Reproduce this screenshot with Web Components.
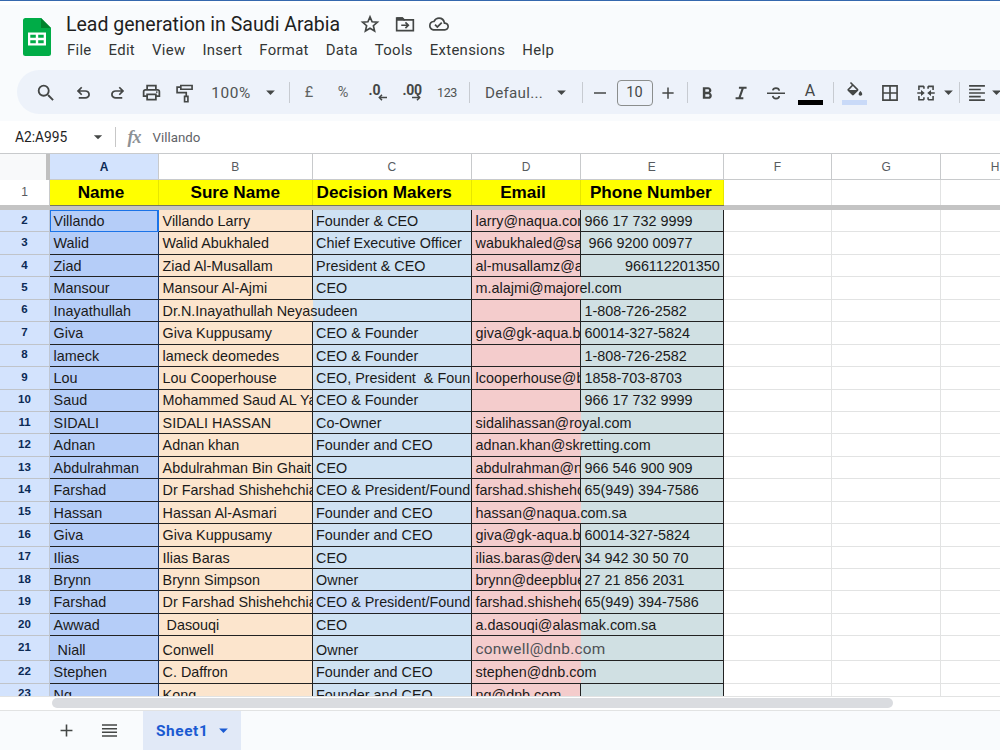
<!DOCTYPE html>
<html lang="en">
<head>
<meta charset="utf-8">
<title>Lead generation in Saudi Arabia</title>
<style>
    html, body { margin: 0; height: 100%; overflow: hidden; background: #fff; }
</style>
</head>
<body>
<sheet-app>
    <doc-header slot="header" name="Lead generation in Saudi Arabia"></doc-header>
    <tool-bar slot="toolbar"></tool-bar>
    <formula-bar slot="formula" range="A2:A995" value="Villando"></formula-bar>
    <sheet-grid></sheet-grid>
    <sheet-tabs slot="footer">Sheet1</sheet-tabs>
</sheet-app>

<script>
const ICONS = {
    star: '<path d="M12 3.4l2.5 5.9 6.4.55-4.85 4.2 1.45 6.25L12 17l-5.5 3.3 1.45-6.25-4.85-4.2 6.4-.55z" fill="none" stroke="currentColor" stroke-width="2"/>',
    move: '<path d="M2 5h7l2 2h11v13H2z" fill="none" stroke="currentColor" stroke-width="2"/><path d="M2 4h7l3 4H2z"/><path d="M7.5 13.5h8M12.5 10l3.5 3.5-3.5 3.5" fill="none" stroke="currentColor" stroke-width="2"/>',
    cloud: '<path d="M19.35 10.04A7.49 7.49 0 0 0 12 4C9.11 4 6.6 5.64 5.35 8.04A5.994 5.994 0 0 0 0 14c0 3.31 2.69 6 6 6h13c2.76 0 5-2.24 5-5 0-2.64-2.05-4.78-4.65-4.96zM19 18H6c-2.21 0-4-1.79-4-4 0-2.05 1.53-3.76 3.56-3.97l1.07-.11.5-.95A5.469 5.469 0 0 1 12 6c2.62 0 4.88 1.86 5.39 4.43l.3 1.5 1.53.11A2.98 2.98 0 0 1 22 15c0 1.65-1.35 3-3 3zm-9-3.82l-2.09-2.09L6.5 13.5 10 17l6.01-6.01-1.41-1.41z"/>',
    search: '<path d="M15.5 14h-.79l-.28-.27A6.471 6.471 0 0 0 16 9.5 6.5 6.5 0 1 0 9.5 16c1.61 0 3.09-.59 4.23-1.57l.27.28v.79l5 4.99L20.49 19l-4.99-5zm-6 0C7.01 14 5 11.99 5 9.5S7.01 5 9.5 5 14 7.01 14 9.5 11.99 14 9.5 14z"/>',
    undo: '<path d="M6 20v-2.200h8.300c1 0 1.850-.3 2.550-.95s1.050-1.450 1.050-2.350-.35-1.700-1.050-2.350-1.550-.95-2.550-.95H7.600l2.900 2.900L9 15.600 3.500 10.100 9 4.600l1.500 1.500-2.900 2.900h6.700c1.600 0 2.980.520 4.120 1.560S20.100 12.930 20.100 14.500s-.57 2.900-1.700 3.940S15.900 20 14.300 20z"/>',
    print: '<path d="M19 8h-1V3H6v5H5c-1.660 0-3 1.340-3 3v6h4v4h12v-4h4v-6c0-1.660-1.340-3-3-3zM8 5h8v3H8zm8 14H8v-4h8zm2-4v-2H6v2H4v-4c0-.55.45-1 1-1h14c.55 0 1 .45 1 1v4z"/><circle cx="18" cy="11.500" r="1"/>',
    roller: '<path d="M7 3h13.500v4.500H7zM7 5H2.500v6.500h11v4M11.500 16h4v6.500h-4z" fill="none" stroke="currentColor" stroke-width="2"/>',
    caret: '<path d="M6.500 9.500h11L12 15z"/>',
    minus: '<path d="M4 11h16v2H4z"/>',
    plus: '<path d="M19.500 13H13v6.500h-2V13H4.500v-2H11V4.500h2V11h6.500z"/>',
    bold: '<path d="M15.600 11.790c.97-.67 1.650-1.770 1.650-2.790 0-2.260-1.750-4-4-4H7v14h7.040c2.090 0 3.710-1.700 3.710-3.790 0-1.520-.86-2.820-2.150-3.420zM10 7.500h3c.83 0 1.500.67 1.500 1.500s-.67 1.500-1.500 1.500h-3zm3.500 9H10v-3h3.500c.83 0 1.500.67 1.500 1.500s-.67 1.500-1.500 1.500z"/>',
    italic: '<path d="M9.500 4.500v2.300h3.100L9 17.200H5.500v2.300h9.300v-2.300h-3.100l3.600-10.400h3.400V4.500z"/>',
    strike: '<path d="M0 11.200h24v2H0z"/><path d="M16.300 9c-.2-2.400-1.900-3.600-4.300-3.600-2.300 0-4 1.100-4.300 3.200M7.700 15.900c.3 2.300 1.900 3.500 4.300 3.500s4.300-1.200 4.300-3.500" fill="none" stroke="currentColor" stroke-width="2.200"/>',
    fill: '<path d="M16.560 8.940L7.620 0 6.210 1.410l2.380 2.380-5.150 5.150a1.490 1.490 0 0 0 0 2.120l5.500 5.500c.29.290.68.440 1.060.44s.77-.15 1.060-.44l5.500-5.500c.59-.58.59-1.530 0-2.120zM10 5.210L14.790 10H5.210zM19.500 11.500s-2.300 2.170-2.300 3.700c0 1.200 1 2.200 2.300 2.200s2.300-1 2.300-2.200c0-1.530-2.300-3.700-2.300-3.700z"/>',
    borders: '<path d="M2.500 2.500v19h19v-19zm8.500 17H4.500V13H11zm0-8.500H4.500V4.500H11zm8.500 8.500H13V13h6.500zm0-8.500H13V4.500h6.500z"/>',
    merge: '<path d="M9.500 4H3.500v4.500M14.500 4h6v4.500M9.500 20H3.500v-4.500M14.500 20h6v-4.500M9.500 4v3M14.500 4v3M9.500 20v-3M14.500 20v-3" fill="none" stroke="currentColor" stroke-width="1.900"/><path d="M1.500 11h4.500V8.500L10.500 12 6 15.500V13H1.500zM22.500 11H18V8.500L13.500 12l4.500 3.500V13h4.500z"/>',
    align: '<path d="M2.500 2.500h19v2h-19zm0 4.250h14v2h-14zm0 4.250h19v2h-19zm0 4.250h14v2h-14zm0 4.250h19v2h-19z"/>',
    menu: '<path d="M2.500 4h19v2h-19zm0 4.700h19v2h-19zm0 4.600h19v2h-19zm0 4.700h19v2h-19z"/>',
};

function icon(name, size = 20, extra = '') {
    return `<svg viewBox="0 0 24 24" width="${size}" height="${size}" fill="currentColor" ${extra}>${ICONS[name]}</svg>`;
}

class SheetApp extends HTMLElement {
    constructor() {
        super();
        this.attachShadow({ mode: 'open' }).innerHTML = `
            <style>
                :host {
                    display: flex;
                    flex-direction: column;
                    box-sizing: border-box;
                    width: 1000px;
                    height: 750px;
                    overflow: hidden;
                    font-family: Roboto, "Liberation Sans", sans-serif;
                    color: #444746;
                }
                .top {
                    box-sizing: border-box;
                    height: 121px;
                    flex: none;
                    background: #f9fbfd;
                    border-top: 1px solid #3568ae;
                }
                .strip { height: 4px; background: #fff; }
            </style>
            <div class="top">
                <div class="strip"></div>
                <slot name="header"></slot>
                <slot name="toolbar"></slot>
            </div>
            <slot name="formula"></slot>
            <slot></slot>
            <slot name="footer"></slot>
        `;
    }
}

class DocHeader extends HTMLElement {
    constructor() {
        super();
        const menus = ['File', 'Edit', 'View', 'Insert', 'Format', 'Data', 'Tools', 'Extensions', 'Help'];
        this.attachShadow({ mode: 'open' }).innerHTML = `
            <style>
                :host { display: flex; height: 65px; padding-left: 23px; }
                .logo { flex: none; width: 28px; margin: 13px 15px 0 0; }
                .logo svg { display: block; }
                .title { display: flex; align-items: center; height: 28px; margin-top: 5px; color: #1f1f1f; }
                h1 { margin: 0; width: 274px; font-size: 19.5px; font-weight: 400; letter-spacing: 0; white-space: nowrap; }
                .title svg { color: #444746; margin-left: 14.500px; }
                .title svg:first-of-type { margin-left: 20px; }
                nav { display: flex; gap: 17px; height: 24px; align-items: center; padding-left: 1px; font-size: 14.900px; letter-spacing: 0.300px; color: #333635; white-space: nowrap; }
            </style>
            <div class="logo">
                <svg width="28" height="38" viewBox="0 0 28 38">
                    <path d="M2.500 0H18l10 10v25.500a2.500 2.500 0 0 1-2.500 2.500h-23A2.500 2.500 0 0 1 0 35.500v-33A2.500 2.500 0 0 1 2.500 0z" fill="#00ac47"/>
                    <path d="M18 0l10 10H18z" fill="#00832d"/>
                    <path d="M5 14.500h18v13H5zM7.300 16.800v3h5.500v-3zm7.900 0v3h5.500v-3zM7.300 22.200v3h5.500v-3zm7.900 0v3h5.500v-3z" fill="#fff" fill-rule="evenodd"/>
                </svg>
            </div>
            <div>
                <div class="title"><h1>${this.getAttribute('name')}</h1>${icon('star', 20)}${icon('move', 20)}${icon('cloud', 20)}</div>
                <nav>${menus.map(m => `<span>${m}</span>`).join('')}</nav>
            </div>
        `;
    }
}

class ToolBar extends HTMLElement {
    constructor() {
        super();
        // [cell width, content]
        const items = [
            [34, icon('search', 22)],
            [3, ''],
            [34, icon('undo', 19)],
            [34, icon('undo', 19, 'style="transform:scaleX(-1)"')],
            [34, icon('print', 21)],
            [33, icon('roller', 20)],
            [60, '<span class="zoom">100%</span>'],
            [18, icon('caret', 19)],
            [20, '<i></i>'],
            [20, '<span class="fmt">£</span>'],
            [48, '<span class="fmt">%</span>'],
            [20, '<span class="dec">.0<svg width="9" height="7" viewBox="0 0 9 7"><path d="M9 3.500H1.500M4 .8L1.300 3.500 4 6.200" fill="none" stroke="currentColor" stroke-width="1.500"/></svg></span>'],
            [50, '<span class="dec two">.00<svg width="9" height="7" viewBox="0 0 9 7"><path d="M0 3.500h7.500M5 .8l2.700 2.700L5 6.200" fill="none" stroke="currentColor" stroke-width="1.500"/></svg></span>'],
            [20, '<span class="num">123</span>'],
            [24, '<i></i>'],
            [66, '<span class="font">Defaul...</span>'],
            [28, icon('caret', 19)],
            [14, '<i></i>'],
            [22, icon('minus', 18)],
            [47, '<span class="size">10</span>'],
            [20, icon('plus', 18)],
            [18, '<i></i>'],
            [22, icon('bold', 20)],
            [46, icon('italic', 20)],
            [24, icon('strike', 18)],
            [44, '<span class="color"><span>A</span><b></b></span>'],
            [2, '<i></i>'],
            [41, `<span class="color fill">${icon('fill', 19)}<b></b></span>`],
            [30, icon('borders', 20)],
            [42, icon('merge', 20)],
            [2, icon('caret', 19)],
            [20, '<i></i>'],
            [16, icon('align', 20)],
            [22, icon('caret', 19)],
        ];
        this.attachShadow({ mode: 'open' }).innerHTML = `
            <style>
                :host {
                    display: flex;
                    align-items: center;
                    box-sizing: border-box;
                    height: 44px;
                    margin-left: 17px;
                    padding-left: 12px;
                    border-radius: 22px 0 0 22px;
                    background: #edf2fa;
                    overflow: hidden;
                    color: #444746;
                }
                div { display: flex; flex: none; align-items: center; justify-content: center; box-sizing: border-box; height: 44px; padding-top: 1px; white-space: nowrap; }
                svg { flex: none; display: block; }
                i { flex: none; width: 1px; height: 21px; background: #c7cbd1; }
                .zoom { font-size: 15.400px; letter-spacing: 0.600px; color: #505352; }
                .fmt { font-size: 14.500px; color: #606362; }
                .num { font-size: 12.500px; letter-spacing: -0.300px; color: #505352; }
                .font { font-size: 15.200px; letter-spacing: 0.250px; color: #505352; }
                .dec { display: flex; flex-direction: column; align-items: flex-start; width: 17px; font-size: 14px; line-height: 13px; font-weight: 700; }
                .dec svg { margin: -3px 0 0 9px; }
                .dec.two { width: 19px; letter-spacing: -0.300px; }
                .size { box-sizing: border-box; width: 36px; height: 26px; border: 1px solid #8b8e8d; border-radius: 4px; text-align: center; font-size: 14.500px; line-height: 24px; }
                .color { display: flex; flex-direction: column; align-items: center; justify-content: flex-end; width: 25px; height: 25px; font-size: 16px; line-height: 16px; }
                .color b { width: 25px; height: 5px; background: #000; margin-top: 1px; }
                .color.fill { justify-content: flex-end; }
                .fill b { background: #c9daf8; margin-top: -1px; }
            </style>
            ${items.map(([w, html]) => `<div style="width:${w}px">${html}</div>`).join('')}
        `;
    }
}

class FormulaBar extends HTMLElement {
    constructor() {
        super();
        this.attachShadow({ mode: 'open' }).innerHTML = `
            <style>
                :host { display: flex; flex: none; align-items: center; height: 32px; background: #fff; font-size: 13.800px; }
                .range { width: 73.500px; padding-left: 15px; color: #1f1f1f; }
                .sep { width: 1px; height: 20px; margin: 0 12px 0 8px; background: #c7c7c7; }
                .fx { width: 25px; font: italic 700 18px "Liberation Serif", serif; color: #8d9195; letter-spacing: -1px; }
                .value { color: #5f6368; font-size: 13.300px; }
            </style>
            <span class="range">${this.getAttribute('range')}</span>
            ${icon('caret', 18)}
            <span class="sep"></span>
            <span class="fx">fx</span>
            <span class="value">${this.getAttribute('value')}</span>
        `;
    }
}

const rows = [
    ['Villando', 'Villando Larry', 'Founder & CEO', 'larry@naqua.com', '966 17 732 9999'],
    ['Walid', 'Walid Abukhaled', 'Chief Executive Officer', 'wabukhaled@sa', ' 966 9200 00977'],
    ['Ziad', 'Ziad Al-Musallam', 'President & CEO', 'al-musallamz@a', '966112201350'],
    ['Mansour', 'Mansour Al-Ajmi', 'CEO', 'm.alajmi@majorel.com', ''],
    ['Inayathullah', 'Dr.N.Inayathullah Neyasudeen', '', '', '1-808-726-2582'],
    ['Giva', 'Giva Kuppusamy', 'CEO & Founder', 'giva@gk-aqua.b', '60014-327-5824'],
    ['lameck', 'lameck deomedes', 'CEO & Founder', '', '1-808-726-2582'],
    ['Lou', 'Lou Cooperhouse', 'CEO, President  & Foun', 'lcooperhouse@b', '1858-703-8703'],
    ['Saud', 'Mohammed Saud AL Ya', 'CEO & Founder', '', '966 17 732 9999'],
    ['SIDALI', 'SIDALI HASSAN', 'Co-Owner', 'sidalihassan@royal.com', ''],
    ['Adnan', 'Adnan khan', 'Founder and CEO', 'adnan.khan@skretting.com', ''],
    ['Abdulrahman', 'Abdulrahman Bin Ghait', 'CEO', 'abdulrahman@n', '966 546 900 909'],
    ['Farshad', 'Dr Farshad Shishehchia', 'CEO & President/Found', 'farshad.shishehc', '65(949) 394-7586'],
    ['Hassan', 'Hassan Al-Asmari', 'Founder and CEO', 'hassan@naqua.com.sa', ''],
    ['Giva', 'Giva Kuppusamy', 'Founder and CEO', 'giva@gk-aqua.b', '60014-327-5824'],
    ['Ilias', 'Ilias Baras', 'CEO', 'ilias.baras@derw', '34 942 30 50 70'],
    ['Brynn', 'Brynn Simpson', 'Owner', 'brynn@deepblue', '27 21 856 2031'],
    ['Farshad', 'Dr Farshad Shishehchia', 'CEO & President/Found', 'farshad.shishehc', '65(949) 394-7586'],
    ['Awwad', ' Dasouqi', 'CEO', 'a.dasouqi@alasmak.com.sa', ''],
    [' Niall', 'Conwell', 'Owner', 'conwell@dnb.com', ''],
    ['Stephen', 'C. Daffron', 'Founder and CEO', 'stephen@dnb.com', ''],
    ['Ng', 'Kong', 'Founder and CEO', 'ng@dnb.com', ''],
];

// cells whose text runs on into the empty cell at their right
const spills = ['5D', '6B', '11D', '12D', '15D', '20D', '21D', '22D'];

class SheetGrid extends HTMLElement {
    constructor() {
        super();
        const letters = ['A', 'B', 'C', 'D', 'E', 'F', 'G', 'H'];
        const heads = ['Name', 'Sure Name', 'Decision Makers', 'Email', 'Phone Number', '', '', ''];

        const body = rows.map((row, r) => {
            const n = r + 2;
            const cells = letters.map((l, c) => {
                const text = (row[c] || '').replace(/&/g, '&amp;');
                const classes = ['cell', l.toLowerCase()];
                if (spills.includes(n + l)) classes.push('spill');
                if (n === 4 && l === 'E') classes.push('right');
                if (n === 2 && l === 'A') classes.push('active');
                if (n === 21 && l === 'D') classes.push('web');
                if (n === 19 && l === 'C') classes.push('alt');
                return `<div class="${classes.join(' ')}">${text ? `<span>${text}</span>` : ''}</div>`;
            }).join('');
            return `<div class="row r${n}"><div class="num">${n}</div>${cells}</div>`;
        }).join('');

        this.attachShadow({ mode: 'open' }).innerHTML = `
            <style>
                :host { display: flex; flex-direction: column; flex: none; height: 558px; background: #fff; font-family: "Liberation Sans", Arial, sans-serif; }
                .row {
                    display: grid;
                    flex: none;
                    grid-template-columns: 50px 109px 153.500px 159.500px 109px 142.700px 108.700px 108.700px 108.900px;
                    height: 22.440px;
                }
                .row > div { box-sizing: border-box; min-width: 0; }
                .letters { height: 27px; border-top: 1px solid #c8cacc; font-size: 12px; color: #575b5f; box-sizing: border-box; }
                .letters > div { display: flex; align-items: center; justify-content: center; border-right: 1px solid #c8cacc; border-bottom: 1px solid #c8cacc; }
                .letters .corner { background: #f8f9fa; border-right: 4px solid #c0c0c0; border-bottom: 0; }
                .letters .sel { background: #d3e3fd; color: #0b2a55; font-weight: 700; }
                .heads { height: 25px; font-size: 17.150px; font-weight: 700; color: #000; }
                .heads > div { display: flex; align-items: center; justify-content: center; border-right: 1px solid #e2e3e3; white-space: nowrap; }
                .heads .y { background: #ff0; border-right-color: #e6e600; padding-right: 6px; }
                .heads .y.b { padding-right: 0; }
                .heads .y.c { padding-right: 15px; }
                .heads .y.e { padding-right: 2px; }
                .heads .num { font-size: 12px; font-weight: 400; color: #575b5f; background: #fff; border-right: 1px solid #c8cacc; border-bottom: 0; }
                .freeze { flex: none; height: 5px; background: #c4c4c4; display: flex; }
                .freeze b { width: 674px; margin-left: 50px; height: 1px; background: #77775c; }
                .rows { height: 487px; overflow: hidden; }
                .num {
                    display: flex;
                    align-items: center;
                    justify-content: center;
                    padding-bottom: 2px;
                    background: #d3e3fd;
                    border-right: 1px solid #c0c8d4;
                    border-bottom: 1px solid #c0c4c9;
                    color: #0b2a55;
                    font-size: 11.500px;
                    font-weight: 700;
                }
                .cell {
                    display: flex;
                    align-items: flex-end;
                    overflow: hidden;
                    padding: 0 3px 1.500px 3.600px;
                    font-size: 14.360px;
                    line-height: 17px;
                    color: #1a1a1a;
                    white-space: pre;
                    border-right: 1px solid #e2e3e3;
                    border-bottom: 1px solid #e2e3e3;
                }
                .a, .b, .c, .d, .e { border-color: #222; }
                .a { background: #b5cdf8; border-right-color: #14305f; }
                .b { background: #fce5cd; }
                .c { background: #cfe2f3; }
                .c.alt { background: #c9daf8; }
                .d { background: #f4cccc; }
                .e { background: #d0e0e3; }
                .spill { overflow: visible; z-index: 1; border-right: 0; }
                .right { justify-content: flex-end; }
                .active { border: 1px solid #1a73e8; border-right-width: 2px; padding-left: 2.600px; padding-right: 1px; }
                .r21 { height: 24.900px; }
                .r21 .cell { padding-bottom: 1px; }
                .r21 .web { font: 15.400px/18px Roboto, sans-serif; letter-spacing: 0.220px; color: #4d5156; padding-bottom: 2.500px; }
                .track { flex: none; box-sizing: border-box; height: 15px; padding: 1px 0 1px 52px; border-top: 1px solid #e2e3e3; border-bottom: 1px solid #e2e3e3; background: #fff; }
                .thumb { width: 841px; height: 10px; border-radius: 5px; background: #dadce0; }
            </style>
            <div class="row letters">
                <div class="corner"></div>
                ${letters.map(l => `<div class="${l === 'A' ? 'sel' : ''}">${l}</div>`).join('')}
            </div>
            <div class="row heads">
                <div class="num">1</div>
                ${heads.map((h, i) => `<div class="${h ? 'y ' + letters[i].toLowerCase() : ''}">${h}</div>`).join('')}
            </div>
            <div class="freeze"><b></b></div>
            <div class="rows">${body}</div>
            <div class="track"><div class="thumb"></div></div>
        `;
    }
}

class SheetTabs extends HTMLElement {
    constructor() {
        super();
        this.attachShadow({ mode: 'open' }).innerHTML = `
            <style>
                :host { display: flex; flex: 1; align-items: center; background: #f9fbfd; color: #444746; }
                .add { margin-left: 57px; }
                .all { margin: 0 24px 0 24px; }
                .tab { display: flex; align-items: center; align-self: stretch; box-sizing: border-box; width: 98px; padding-left: 13px; background: #e1e9f7; color: #1a5ad2; font-size: 15.400px; font-weight: 700; letter-spacing: 0.600px; }
                .tab svg { margin-left: 6px; }
                svg { flex: none; }
            </style>
            ${icon('plus', 19, 'class="add"')}
            ${icon('menu', 19, 'class="all"')}
            <div class="tab"><slot></slot>${icon('caret', 19)}</div>
        `;
    }
}

customElements.define('sheet-app', SheetApp);
customElements.define('doc-header', DocHeader);
customElements.define('tool-bar', ToolBar);
customElements.define('formula-bar', FormulaBar);
customElements.define('sheet-grid', SheetGrid);
customElements.define('sheet-tabs', SheetTabs);
</script>
</body>
</html>
